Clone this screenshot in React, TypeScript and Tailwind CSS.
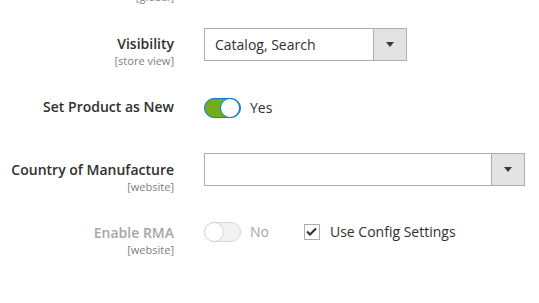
const font = { fontFamily: '"Open Sans", "Noto Sans", sans-serif' }

function Label({ title, scope, muted }: { title: string; scope?: string; muted?: boolean }) {
  return (
    <div className="w-[174px] shrink-0 text-right">
      <div className={`text-[14px] leading-[20px] font-semibold ${muted ? 'text-[#a6a6a6]' : 'text-[#303030]'}`}>
        {title}
      </div>
      {scope ? <div className="text-[11px] leading-[13px] text-[#808080]">{scope}</div> : null}
    </div>
  )
}

function Select({ value, width }: { value: string; width: string }) {
  return (
    <div className={`flex h-[33px] border border-[#adadad] bg-white ${width}`}>
      <div className="flex flex-1 items-center pl-[10px] text-[14px] text-[#303030]">{value}</div>
      <div className="flex w-[33px] items-center justify-center border-l border-[#adadad] bg-[#e3e3e3]">
        <svg width="8" height="5" viewBox="0 0 8 5">
          <path d="M0 0h8L4 5z" fill="#41362f" />
        </svg>
      </div>
    </div>
  )
}

function Toggle({ on, label }: { on: boolean; label: string }) {
  return (
    <div className="flex items-center">
      {on ? (
        <div className="flex h-[20px] w-[37px] items-center justify-end rounded-full border border-[#007bdb] bg-[#72ad1c]">
          <div className="h-[20px] w-[20px] rounded-full border border-[#007bdb] bg-white" />
        </div>
      ) : (
        <div className="flex h-[20px] w-[37px] items-center rounded-full border border-[#d6d6d6] bg-[#f2f2f2]">
          <div className="ml-[-1px] h-[20px] w-[20px] rounded-full border border-[#d6d6d6] bg-white" />
        </div>
      )}
      <span className={`ml-[9px] text-[14px] ${on ? 'text-[#303030]' : 'text-[#a6a6a6]'}`}>{label}</span>
    </div>
  )
}

export default function App() {
  return (
    <div className="h-[303px] w-[539px] overflow-hidden bg-white" style={font}>
      <div className="mt-[-10px] w-[174px] text-right text-[11px] leading-[13px] text-[#808080]">[global]</div>

      <div className="mt-[25px] flex items-start gap-[30px]">
        <div className="pt-[6px]">
          <Label title="Visibility" scope="[store view]" />
        </div>
        <Select value="Catalog, Search" width="w-[203px]" />
      </div>

      <div className="mt-[1px] flex items-start gap-[30px]">
        <div className="pt-[29px]">
          <Label title="Set Product as New" />
        </div>
        <div className="pt-[29px]">
          <Toggle on label="Yes" />
        </div>
      </div>

      <div className="mt-[35px] flex items-start gap-[30px]">
        <div className="pt-[7px]">
          <Label title="Country of Manufacture" scope="[website]" />
        </div>
        <Select value="" width="w-[321px]" />
      </div>

      <div className="mt-[28px] flex items-start gap-[30px]">
        <div className="pt-[2px]">
          <Label title="Enable RMA" scope="[website]" muted />
        </div>
        <div className="flex items-center">
          <Toggle on={false} label="No" />
          <div className="ml-[35px] flex items-center">
            <div className="flex h-[16px] w-[16px] items-center justify-center border border-[#adadad] bg-white">
              <svg width="11" height="9" viewBox="0 0 11 9">
                <path d="M1 4.5l3 3L10 1.5" fill="none" stroke="#303030" strokeWidth="2" />
              </svg>
            </div>
            <span className="ml-[10px] text-[14px] text-[#303030]">Use Config Settings</span>
          </div>
        </div>
      </div>
    </div>
  )
}
